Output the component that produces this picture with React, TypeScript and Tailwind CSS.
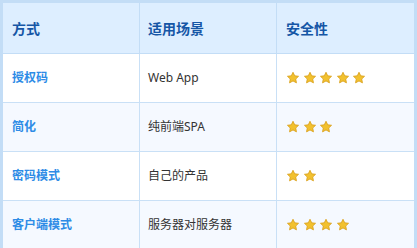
import React from "react";

const rows = [
  { name: "授权码", scene: "Web App", stars: 5 },
  { name: "简化", scene: "纯前端SPA", stars: 3 },
  { name: "密码模式", scene: "自己的产品", stars: 2 },
  { name: "客户端模式", scene: "服务器对服务器", stars: 4 },
];

function Star() {
  return (
    <svg width="14" height="14" viewBox="0 0 24 24">
      <path
        d="M12 2.2l2.9 6.1 6.6.8-4.9 4.6 1.3 6.6L12 17l-5.9 3.3 1.3-6.6-4.9-4.6 6.6-.8z"
        fill="#f2c12e"
        stroke="#dba524"
        strokeWidth="1.6"
        strokeLinejoin="round"
      />
    </svg>
  );
}

export default function App() {
  const font = { fontFamily: '"Noto Sans", "Noto Sans CJK SC", sans-serif' };
  return (
    <div className="w-[417px] h-[248px] overflow-hidden bg-white" style={font}>
      <div className="border-t-[3px] border-x-[3px] border-[#c3ddf6] grid grid-cols-[137px_137px_137px]">
        <div className="h-[51px] bg-[#ddeeff] border-r border-b-[1.5px] border-[#c3ddf6] flex items-center pl-[9px] text-[14px] font-bold text-[#1556a6]">方式</div>
        <div className="h-[51px] bg-[#ddeeff] border-r border-b-[1.5px] border-[#c3ddf6] flex items-center pl-[8px] text-[14px] font-bold text-[#1556a6]">适用场景</div>
        <div className="h-[51px] bg-[#ddeeff] border-b-[1.5px] border-[#c3ddf6] flex items-center pl-[9px] text-[14px] font-bold text-[#1556a6]">安全性</div>
        {rows.map((r, i) => {
          const bg = i % 2 === 1 ? "bg-[#f5f9ff]" : "bg-white";
          return (
            <React.Fragment key={r.name}>
              <div className={`h-[49px] ${bg} border-r border-b border-[#c9e0f6] flex items-center pl-[9px] text-[12px] font-bold text-[#2e8ce6]`}>{r.name}</div>
              <div className={`h-[49px] ${bg} border-r border-b border-[#c9e0f6] flex items-center pl-[8px] text-[12px] text-[#333333]`}>{r.scene}</div>
              <div className={`h-[49px] ${bg} border-b border-[#c9e0f6] flex items-center pl-[9px] gap-[2.5px]`}>
                {Array.from({ length: r.stars }).map((_, k) => (
                  <Star key={k} />
                ))}
              </div>
            </React.Fragment>
          );
        })}
      </div>
    </div>
  );
}
